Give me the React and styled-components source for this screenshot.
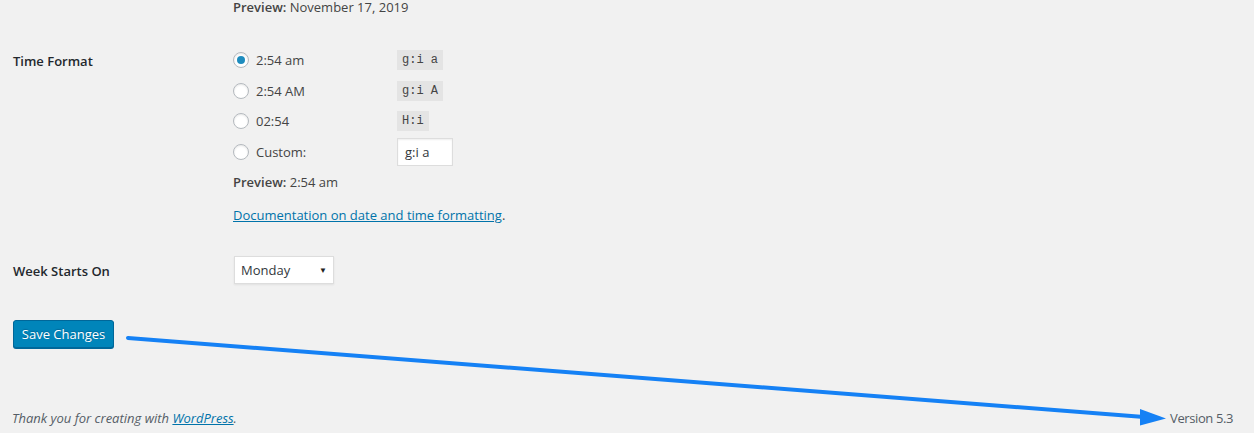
import React from "react";
import styled, { createGlobalStyle } from "styled-components";

const Global = createGlobalStyle`
  html, body { margin: 0; padding: 0; background: #f1f1f1; }
  body {
    font-family: "Open Sans", "Noto Sans", sans-serif;
    font-size: 13px;
    color: #444;
    -webkit-font-smoothing: antialiased;
  }
`;

const Page = styled.div`
  position: relative;
  width: 1254px;
  height: 433px;
  overflow: hidden;
  box-sizing: border-box;
  padding: 0 21px 0 13px;
  display: flex;
  flex-direction: column;
`;

const Row = styled.div`
  display: grid;
  grid-template-columns: 220px 1fr;
  align-items: start;
`;

const Label = styled.div`
  font-weight: 600;
  color: #23282d;
  font-size: 13px;
  line-height: 20px;
  margin-top: ${(p) => p.$top || 0}px;
`;

const Field = styled.div`
  display: flex;
  flex-direction: column;
  padding-top: ${(p) => p.$top || 0}px;
`;

const Preview = styled.div`
  line-height: ${(p) => p.$lh || 20}px;
  margin-top: ${(p) => p.$top || 0}px;
  color: #444;
  b { font-weight: 600; }
`;

const Options = styled.div`
  display: flex;
  flex-direction: column;
  margin-top: ${(p) => p.$top || 0}px;
`;

const Option = styled.label`
  display: flex;
  align-items: center;
  height: 30.5px;
`;

const Radio = styled.span`
  box-sizing: border-box;
  width: 16px;
  height: 16px;
  border-radius: 50%;
  border: 1px solid #b4b9be;
  background: #fff;
  box-shadow: inset 0 1px 2px rgba(0, 0, 0, 0.1);
  display: flex;
  align-items: center;
  justify-content: center;
  flex: none;
  &::after {
    content: "";
    width: 8px;
    height: 8px;
    border-radius: 50%;
    background: ${(p) => (p.$checked ? "#1e8cbe" : "transparent")};
  }
`;

const OptionText = styled.span`
  width: 141px;
  margin-left: 7px;
  line-height: 20px;
  color: #444;
`;

const Code = styled.code`
  font-family: "Liberation Mono", "DejaVu Sans Mono", monospace;
  font-size: 12px;
  line-height: 15px;
  padding: 3px 5px 2px;
  background: #e4e4e4;
  color: #444;
`;

const TextInput = styled.div`
  box-sizing: border-box;
  width: 56px;
  height: 28px;
  background: #fff;
  border: 1px solid #ddd;
  box-shadow: inset 0 1px 2px rgba(0, 0, 0, 0.07);
  padding: 0 7px;
  line-height: 26px;
  color: #32373c;
`;

const DocLink = styled.div`
  margin-top: 13px;
  line-height: 20px;
  a { color: #0073aa; text-decoration: underline; }
`;

const Select = styled.div`
  box-sizing: border-box;
  width: 100px;
  height: 28px;
  margin-left: 1px;
  background: #fff;
  border: 1px solid #ddd;
  box-shadow: 0 1px 2px rgba(0, 0, 0, 0.07);
  display: flex;
  align-items: center;
  justify-content: space-between;
  padding: 0 6px 0 6px;
  color: #32373c;
`;

const Caret = styled.span`
  font-size: 8px;
  color: #222;
  margin-top: -2px;
`;

const Button = styled.button`
  align-self: flex-start;
  box-sizing: border-box;
  width: 101px;
  height: 28px;
  margin-top: 36px;
  background: #0085ba;
  border: 1px solid #006799;
  border-radius: 3px;
  box-shadow: 0 1px 0 #006799;
  color: #fff;
  font-family: inherit;
  font-size: 13px;
  padding: 0;
  text-shadow: 0 -1px 1px #006799;
`;

const Footer = styled.div`
  margin-top: auto;
  margin-left: -1px;
  height: 25px;
  display: flex;
  justify-content: space-between;
  align-items: flex-start;
  color: #555d66;
  line-height: 20px;
`;

const Thanks = styled.span`
  font-style: italic;
  a { color: #0073aa; text-decoration: underline; }
`;

const Version = styled.span`
  letter-spacing: -0.4px;
`;

const Overlay = styled.svg`
  position: absolute;
  left: 0;
  top: 0;
  pointer-events: none;
`;

export default function App() {
  return (
    <>
      <Global />
      <Page>
        <Row>
          <div />
          <Preview $lh={15}>
            <b>Preview:</b> November 17, 2019
          </Preview>
        </Row>
        <Row>
          <Label $top={36}>Time Format</Label>
          <Field>
            <Options $top={30}>
              <Option>
                <Radio $checked />
                <OptionText>2:54 am</OptionText>
                <Code>g:i a</Code>
              </Option>
              <Option>
                <Radio />
                <OptionText>2:54 AM</OptionText>
                <Code>g:i A</Code>
              </Option>
              <Option>
                <Radio />
                <OptionText>02:54</OptionText>
                <Code>H:i</Code>
              </Option>
              <Option>
                <Radio />
                <OptionText>Custom:</OptionText>
                <TextInput>g:i a</TextInput>
              </Option>
            </Options>
            <Preview $top={5}>
              <b>Preview:</b> 2:54 am
            </Preview>
            <DocLink>
              <a href="#">Documentation on date and time formatting</a>.
            </DocLink>
          </Field>
        </Row>
        <Row>
          <Label $top={36}>Week Starts On</Label>
          <Field $top={31}>
            <Select>
              Monday <Caret>▼</Caret>
            </Select>
          </Field>
        </Row>
        <Button>Save Changes</Button>
        <Footer>
          <Thanks>
            Thank you for creating with <a href="#">WordPress</a>.
          </Thanks>
          <Version>Version 5.3</Version>
        </Footer>
        <Overlay width="1254" height="433" viewBox="0 0 1254 433">
          <line x1="128" y1="338" x2="1144" y2="417" stroke="#1581f5" strokeWidth="4" strokeLinecap="round" />
          <polygon points="1140,409 1166,418.5 1140,425.5" fill="#1581f5" />
        </Overlay>
      </Page>
    </>
  );
}
